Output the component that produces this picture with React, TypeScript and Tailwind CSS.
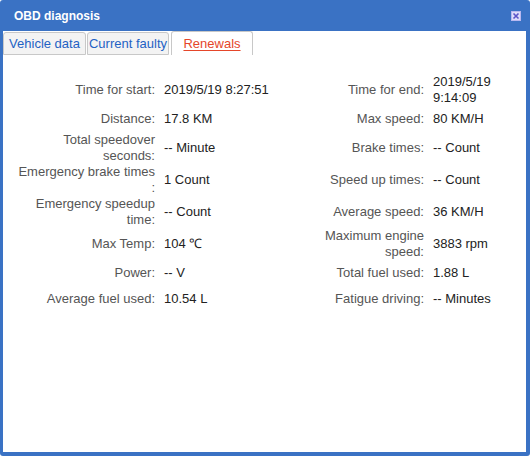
import { Fragment } from "react";

const rows: [string, string, string, string][] = [
  ["Time for start:", "2019/5/19 8:27:51", "Time for end:", "2019/5/19 9:14:09"],
  ["Distance:", "17.8 KM", "Max speed:", "80 KM/H"],
  ["Total speedover seconds:", "-- Minute", "Brake times:", "-- Count"],
  ["Emergency brake times :", "1 Count", "Speed up times:", "-- Count"],
  ["Emergency speedup time:", "-- Count", "Average speed:", "36 KM/H"],
  ["Max Temp:", "104 ℃", "Maximum engine speed:", "3883 rpm"],
  ["Power:", "-- V", "Total fuel used:", "1.88 L"],
  ["Average fuel used:", "10.54 L", "Fatigue driving:", "-- Minutes"],
];

const tabs = ["Vehicle data", "Current faulty", "Renewals"];

function CloseIcon() {
  return (
    <svg width="10" height="10" viewBox="0 0 10 10">
      <rect x="0.5" y="0.5" width="9" height="9" fill="#dcdcfa" stroke="#b8b8f0" />
      <path d="M2.5 2.5 L7.5 7.5 M7.5 2.5 L2.5 7.5" stroke="#5a54c8" strokeWidth="1.6" />
    </svg>
  );
}

export default function App() {
  return (
    <div
      className="w-[532px] h-[459px] bg-white"
      style={{ fontFamily: '"Liberation Sans", Arial, sans-serif' }}
    >
      <div className="w-[530px] h-[456px] bg-[#3a72c4] rounded-[3px] flex flex-col pl-[3px] pr-[4px] pb-[4px]">
        {/* title bar */}
        <div className="h-[31px] flex items-center justify-between pl-[11px] pr-[5px] shrink-0">
          <span className="text-white font-bold text-[12px]">OBD diagnosis</span>
          <CloseIcon />
        </div>

        {/* body */}
        <div className="flex-1 bg-white flex flex-col">
          <div className="flex items-end h-[24px] gap-[1px]">
            {tabs.map((t, i) =>
              i === 2 ? (
                <div
                  key={t}
                  className="ml-[1px] w-[82px] h-[24px] bg-white border border-b-0 border-[#c8c8c8] rounded-t-[3px] flex items-center justify-center text-[13px] text-[#e5462a] underline underline-offset-2"
                >
                  {t}
                </div>
              ) : (
                <div
                  key={t}
                  className={`${i === 0 ? "w-[83px]" : "w-[82px]"} h-[23px] bg-[#f3f3f3] border border-[#c8c8c8] rounded-t-[3px] flex items-center justify-center text-[13px] text-[#1f62c4]`}
                >
                  {t}
                </div>
              )
            )}
          </div>

          <div className="mt-[19px] ml-[14px] grid grid-cols-[138px_155px_114px_86px] auto-rows-[minmax(26px,auto)] items-center text-[13px] leading-[16px]">
            {rows.map(([l1, v1, l2, v2]) => (
              <Fragment key={l1}>
                <div className="text-right text-[#555]">{l1}</div>
                <div className="pl-[9px] text-[#222]">{v1}</div>
                <div className="text-right text-[#555]">{l2}</div>
                <div className="pl-[9px] text-[#222]">{v2}</div>
              </Fragment>
            ))}
          </div>
        </div>
      </div>
    </div>
  );
}
